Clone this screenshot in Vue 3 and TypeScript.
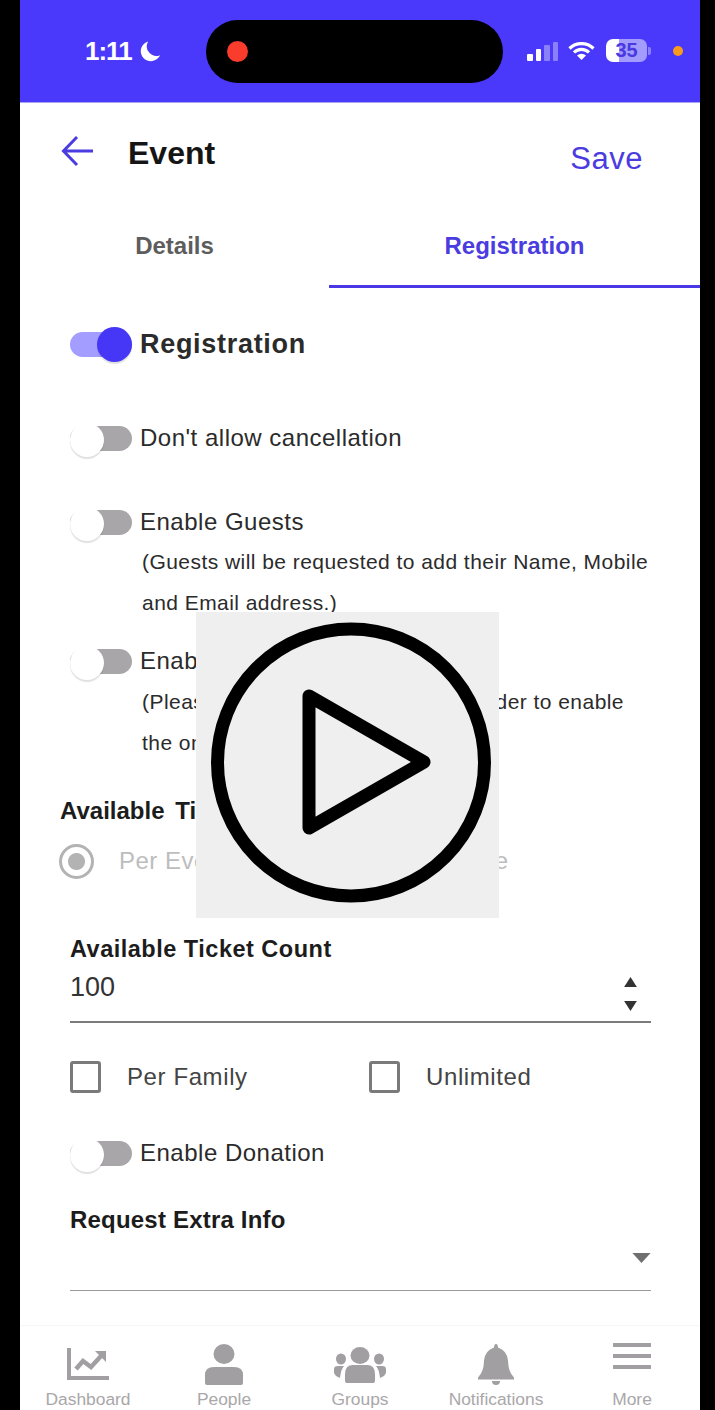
<template>
  <div class="device">
    <main class="screen">
      <header class="status-bar">
        <div class="status-left">
          <span class="clock">1:11</span>
          <svg class="moon" viewBox="0 0 24 24"><path d="M10 1.500A11 11 0 1 0 23 16.500 10.500 10.500 0 0 1 10 1.500Z" fill="#fff" /></svg>
        </div>
        <div class="island"><span class="rec-dot"></span></div>
        <div class="status-right">
          <div class="signal">
            <span v-for="bar in signalBars" :key="bar.height" :class="{ dim: bar.dim }" :style="{ height: bar.height + 'px' }"></span>
          </div>
          <svg class="wifi" viewBox="0 0 27 18">
            <path d="M1.500 6.500a17 17 0 0 1 24 0M6 10.500a10.500 10.500 0 0 1 15 0" fill="none" stroke="#fff" stroke-width="3.200" />
            <path d="M13.500 18 9 13.500a6.500 6.500 0 0 1 9 0Z" fill="#fff" />
          </svg>
          <div class="battery"><span class="battery-level">35</span></div>
          <span class="battery-cap"></span>
          <span class="mic-dot"></span>
        </div>
      </header>

      <div class="toolbar">
        <svg class="back" viewBox="0 0 34 32"><path d="M32 16H3M16 2 2.500 16 16 30" fill="none" stroke="#4a3ce0" stroke-width="3" /></svg>
        <h1 class="title">Event</h1>
        <button class="save">Save</button>
      </div>

      <nav class="tabs">
        <div class="tab">Details</div>
        <div class="tab active">Registration</div>
      </nav>

      <section class="form">
        <div class="switch-row main-row">
          <span class="toggle on"><i></i></span>
          <strong>Registration</strong>
        </div>
        <div class="switch-row cancel-row">
          <span class="toggle"><i></i></span>
          <span>Don't allow cancellation</span>
        </div>
        <div class="switch-row guests-row">
          <span class="toggle"><i></i></span>
          <span>Enable Guests</span>
        </div>
        <p class="hint guests-hint">(Guests will be requested to add their Name, Mobile and Email address.)</p>
        <div class="switch-row pay-row">
          <span class="toggle"><i></i></span>
          <span>Enable Online Payment</span>
        </div>
        <p class="hint">(Please connect Stripe account in order to enable the online payment.)</p>

        <h2 class="ticket-title">Available Tickets</h2>
        <div class="radio-row">
          <span class="radio"></span>
          <span class="radio-label">Per Event</span>
          <span class="radio-label second">Per Type</span>
        </div>

        <label class="field-label count-label">Available Ticket Count</label>
        <div class="count-input">
          <span>100</span>
          <div class="spinner">
            <svg viewBox="0 0 14 11"><path d="M7 0l7 11H0Z" /></svg>
            <svg viewBox="0 0 14 11"><path d="M0 0h14L7 11Z" /></svg>
          </div>
        </div>

        <div class="check-row">
          <span class="check-item"><span class="checkbox"></span>Per Family</span>
          <span class="check-item"><span class="checkbox"></span>Unlimited</span>
        </div>

        <div class="switch-row donation-row">
          <span class="toggle"><i></i></span>
          <span>Enable Donation</span>
        </div>

        <label class="field-label extra-label">Request Extra Info</label>
        <div class="select">
          <svg viewBox="0 0 20 11"><path d="M0 0h20L10 11Z" /></svg>
        </div>
      </section>

      <footer class="bottom-nav">
        <div class="nav-item">
          <svg viewBox="0 0 42 32">
            <path d="M2 0v30h40" fill="none" stroke="#a19fa1" stroke-width="4" />
            <path d="M9 21l7-8 8 6 10-11" fill="none" stroke="#a19fa1" stroke-width="4.500" />
            <path d="M28 3h11v11Z" fill="#a19fa1" />
          </svg>
          <span>Dashboard</span>
        </div>
        <div class="nav-item">
          <svg viewBox="0 0 38 41">
            <ellipse cx="19" cy="10" rx="10.500" ry="10" />
            <path d="M0 39V31Q0 23 9 23H29Q38 23 38 31V39Q38 41 36 41H2Q0 41 0 39Z" />
          </svg>
          <span>People</span>
        </div>
        <div class="nav-item">
          <svg viewBox="0 0 52 36">
            <ellipse cx="26" cy="8.500" rx="9.500" ry="8.500" />
            <ellipse cx="7" cy="12" rx="5" ry="5.500" />
            <ellipse cx="45" cy="12" rx="5" ry="5.500" />
            <path d="M11 34V27Q11 18 19 18H33Q41 18 41 27V34Q41 36 39 36H13Q11 36 11 34Z" />
            <path d="M0 26V22Q0 19 4 19H10Q7 22 6 31L2 29ZM52 26V22Q52 19 48 19H42Q45 22 46 31L50 29Z" />
          </svg>
          <span>Groups</span>
        </div>
        <div class="nav-item">
          <svg viewBox="0 0 36 41">
            <path d="M18 0q2 0 2 3.500 9 3 10 13 0 11 6 17v2H0v-2q6-6 6-17 1-10 10-13Q16 0 18 0Z" />
            <path d="M14 37h8q0 4-4 4t-4-4Z" />
          </svg>
          <span>Notifications</span>
        </div>
        <div class="nav-item">
          <svg viewBox="0 0 38 26">
            <path d="M0 2h38M0 13h38M0 24h38" stroke="#a19fa1" stroke-width="4" />
          </svg>
          <span>More</span>
        </div>
      </footer>

      <!-- video poster sits over the form -->
      <div class="play-overlay">
        <svg viewBox="0 0 303 306">
          <circle cx="155" cy="150.500" r="133.500" fill="none" stroke="#000" stroke-width="13" />
          <path d="M113 84V216L228 150Z" fill="none" stroke="#000" stroke-width="13" stroke-linejoin="round" />
        </svg>
      </div>
    </main>
  </div>
</template>

<script setup lang="ts">
const signalBars = [
  { height: 7, dim: false },
  { height: 12, dim: false },
  { height: 16, dim: true },
  { height: 19, dim: true },
]
</script>

<style>
html, body { margin: 0; background: #000; }
</style>

<style scoped>
.device {
  width: 715px;
  height: 1410px;
  background: #000;
  overflow: hidden;
  font-family: "Liberation Sans", Arial, sans-serif;
}

.screen {
  position: relative;
  width: 680px;
  height: 1410px;
  margin-left: 20px;
  background: #fff;
  display: flex;
  flex-direction: column;
  color: #2b2b2b;
}

.status-bar {
  height: 103px;
  flex: none;
  background: #4a38fb;
  display: flex;
  align-items: flex-start;
  box-sizing: border-box;
  border-bottom: 1px solid #a9a2f0;
}

.status-left {
  width: 186px;
  display: flex;
  align-items: center;
  padding: 35px 0 0 65px;
  box-sizing: border-box;
  color: #fff;
}

.clock { font-size: 26px; font-weight: 700; line-height: 32px; letter-spacing: -1px; }

.moon { width: 22px; height: 22px; margin-left: 7px; }

.island {
  width: 297px;
  height: 63px;
  margin-top: 20px;
  flex: none;
  border-radius: 32px;
  background: #000;
  display: flex;
  align-items: center;
  padding-left: 21px;
  box-sizing: border-box;
}

.rec-dot { width: 21px; height: 21px; border-radius: 50%; background: #fa3c2c; }

.status-right {
  display: flex;
  align-items: center;
  padding: 39px 0 0 24px;
}

.signal { display: flex; align-items: flex-end; gap: 3px; height: 20px; }

.signal span { width: 5.500px; background: #fff; border-radius: 1px; }

.signal span.dim { background: #8b80fb; }

.wifi { width: 27px; height: 18px; margin-left: 10px; }

.battery {
  width: 41px;
  height: 23px;
  margin-left: 11px;
  border-radius: 7px;
  background: linear-gradient(90deg, #fff 0 32%, #a49cfc 32%);
  text-align: center;
}

.battery-level { font-size: 20px; font-weight: 700; line-height: 23px; color: #4a38e0; display: block; }

.battery-cap { width: 3px; height: 8px; margin-left: 1px; background: #8b80fb; border-radius: 0 2px 2px 0; }

.mic-dot { width: 10px; height: 10px; margin-left: 22px; border-radius: 50%; background: #f89a1c; }

.toolbar {
  height: 97px;
  flex: none;
  display: flex;
  align-items: flex-start;
  position: relative;
}

.back { width: 34px; height: 32px; margin: 32px 0 0 41px; }

.title {
  margin: 31px 0 0 33px;
  font-size: 32px;
  line-height: 38px;
  font-weight: 700;
  color: #151515;
}

.save {
  margin: 37px 57px 0 auto;
  padding: 0;
  border: 0;
  background: none;
  font: 400 31px/38px "Liberation Sans", Arial, sans-serif;
  letter-spacing: 0.5px;
  color: #4a3ce0;
}

.tabs { display: flex; height: 88px; flex: none; }

.tab {
  box-sizing: border-box;
  width: 309px;
  padding-top: 31px;
  text-align: center;
  font-size: 24px;
  line-height: 30px;
  font-weight: 700;
  color: #5d5d5d;
}

.tab.active {
  width: 371px;
  color: #4a3ce0;
  border-bottom: 3px solid #4a38e6;
}

.form { flex: 1; display: flex; flex-direction: column; }

.switch-row {
  display: flex;
  align-items: center;
  gap: 8px;
  padding-left: 50px;
  height: 36px;
  font-size: 24px;
  letter-spacing: 0.5px;
}

.switch-row strong { font-size: 27px; letter-spacing: 0.7px; }

.main-row { margin-top: 38px; }
.cancel-row { margin-top: 58px; }
.guests-row { margin-top: 48px; }
.pay-row { margin-top: 20px; }

.toggle {
  position: relative;
  flex: none;
  width: 62px;
  height: 25px;
  border-radius: 13px;
  background: #a8a6a8;
}

.toggle i {
  position: absolute;
  left: 0;
  top: -3px;
  width: 34px;
  height: 34px;
  border-radius: 50%;
  background: #fff;
  box-shadow: 0 2px 1px rgba(0, 0, 0, 0.12);
}

.toggle.on { background: #a39dff; }

.toggle.on i { left: 27px; top: -5px; width: 35px; height: 35px; background: #4636f5; }

.hint {
  margin: 2px 0 0;
  padding: 0 50px 0 122px;
  font-size: 21px;
  line-height: 41px;
  letter-spacing: 0.45px;
}

.guests-hint { margin-top: 1px; }

.ticket-title {
  margin: 33px 0 0 40px;
  font-size: 24px;
  line-height: 30px;
  font-weight: 700;
  word-spacing: 4px;
  color: #1c1c1c;
}

.radio-row {
  display: flex;
  align-items: center;
  height: 36px;
  margin: 17px 0 0 39px;
}

.radio {
  box-sizing: border-box;
  flex: none;
  width: 35px;
  height: 35px;
  border: 3px solid #b3b3b3;
  border-radius: 50%;
  background: radial-gradient(circle, #b3b3b3 0 8px, #fff 9px);
}

.radio-label { margin-left: 25px; font-size: 24px; letter-spacing: 0.5px; color: #bdbdbd; }

.radio-label.second { margin-left: 180px; }

.field-label {
  display: block;
  font-weight: 700;
  color: #1c1c1c;
  margin-left: 50px;
}

.count-label { margin-top: 56px; font-size: 23.500px; line-height: 28px; letter-spacing: 0.5px; }

.count-input {
  display: flex;
  justify-content: space-between;
  align-items: flex-start;
  margin: 8px 49px 0 50px;
  height: 50px;
  border-bottom: 2px solid #7b7b7b;
  font-size: 27px;
  line-height: 32px;
  color: #333;
}

.spinner { display: flex; flex-direction: column; gap: 14px; padding: 6px 14px 0 0; }

.spinner svg { display: block; width: 13px; height: 10px; fill: #333; }

.check-row {
  display: flex;
  margin: 38px 0 0 50px;
  font-size: 24px;
  letter-spacing: 0.6px;
  color: #444;
}

.check-item { display: flex; align-items: center; gap: 26px; width: 299px; }

.checkbox {
  box-sizing: border-box;
  width: 31px;
  height: 32px;
  border: 3px solid #7a7a7a;
  border-radius: 3px;
}

.donation-row { margin-top: 42px; }

.extra-label { margin-top: 35px; font-size: 24px; line-height: 28px; letter-spacing: 0.2px; }

.select {
  display: flex;
  justify-content: flex-end;
  margin: 0 49px 0 50px;
  height: 56px;
  border-bottom: 1px solid #9a9a9a;
}

.select svg { width: 19px; height: 10px; margin-top: 19px; fill: #6f6f6f; }

.bottom-nav {
  height: 85px;
  flex: none;
  display: grid;
  grid-template-columns: repeat(5, 136px);
  background: #fff;
  border-top: 1px solid #f7f7f7;
  box-sizing: border-box;
}

.nav-item {
  display: flex;
  flex-direction: column;
  align-items: center;
  justify-content: flex-end;
  font-size: 17.400px;
  line-height: 22px;
  color: #a9a7a9;
}

.nav-item svg { flex: none; fill: #a19fa1; }

.nav-item:nth-child(1) svg { width: 42px; height: 32px; margin-bottom: 8px; }
.nav-item:nth-child(2) svg { width: 38px; height: 41px; margin-bottom: 3px; }
.nav-item:nth-child(3) svg { width: 52px; height: 36px; margin-bottom: 5px; }
.nav-item:nth-child(4) svg { width: 36px; height: 41px; margin-bottom: 3px; }
.nav-item:nth-child(5) svg { width: 38px; height: 26px; margin-bottom: 19px; }

.play-overlay {
  position: absolute;
  left: 176px;
  top: 612px;
  width: 303px;
  height: 306px;
  background: #efefef;
}

.play-overlay svg { display: block; width: 303px; height: 306px; }
</style>
